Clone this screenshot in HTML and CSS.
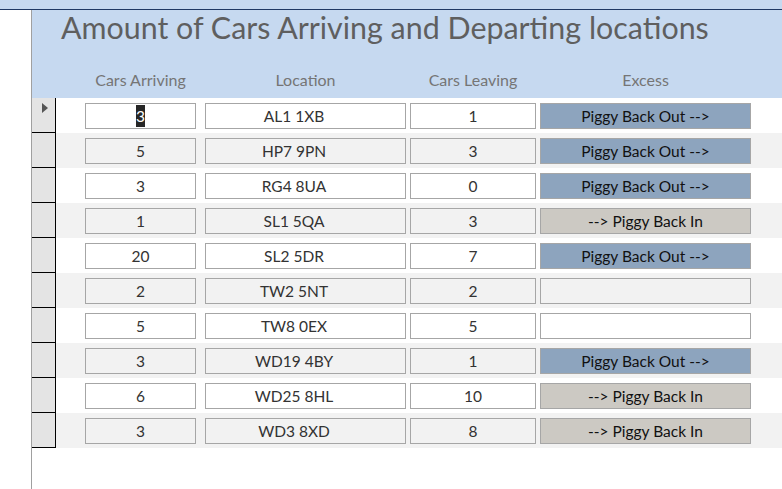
FILE: index.html
```
<!DOCTYPE html>
<html>
<head>
<meta charset="UTF-8">
<title>Amount of Cars Arriving and Departing locations</title>
<link rel="stylesheet" href="styles.css">
</head>
<body>
<div class="topbar"></div>
<div class="main">
	<div class="gutter"></div>
	<div class="form">
		<div class="formHead">
			<div class="title">Amount of Cars Arriving and Departing locations</div>
			<div class="labels">
				<div class="cArr">Cars Arriving</div>
				<div class="cLoc">Location</div>
				<div class="cLeave">Cars Leaving</div>
				<div class="cExc">Excess</div>
			</div>
		</div>
		<div class="rows">
			<div class="row">
				<div class="sel"><span class="arrow"></span></div>
				<div class="box cArr"><span class="hl">3</span></div>
				<div class="box cLoc">AL1 1XB</div>
				<div class="box cLeave">1</div>
				<div class="box cExc out">Piggy Back Out --&gt;</div>
			</div>
			<div class="row">
				<div class="sel"></div>
				<div class="box cArr">5</div>
				<div class="box cLoc">HP7 9PN</div>
				<div class="box cLeave">3</div>
				<div class="box cExc out">Piggy Back Out --&gt;</div>
			</div>
			<div class="row">
				<div class="sel"></div>
				<div class="box cArr">3</div>
				<div class="box cLoc">RG4 8UA</div>
				<div class="box cLeave">0</div>
				<div class="box cExc out">Piggy Back Out --&gt;</div>
			</div>
			<div class="row">
				<div class="sel"></div>
				<div class="box cArr">1</div>
				<div class="box cLoc">SL1 5QA</div>
				<div class="box cLeave">3</div>
				<div class="box cExc in">--&gt; Piggy Back In</div>
			</div>
			<div class="row">
				<div class="sel"></div>
				<div class="box cArr">20</div>
				<div class="box cLoc">SL2 5DR</div>
				<div class="box cLeave">7</div>
				<div class="box cExc out">Piggy Back Out --&gt;</div>
			</div>
			<div class="row">
				<div class="sel"></div>
				<div class="box cArr">2</div>
				<div class="box cLoc">TW2 5NT</div>
				<div class="box cLeave">2</div>
				<div class="box cExc"></div>
			</div>
			<div class="row">
				<div class="sel"></div>
				<div class="box cArr">5</div>
				<div class="box cLoc">TW8 0EX</div>
				<div class="box cLeave">5</div>
				<div class="box cExc"></div>
			</div>
			<div class="row">
				<div class="sel"></div>
				<div class="box cArr">3</div>
				<div class="box cLoc">WD19 4BY</div>
				<div class="box cLeave">1</div>
				<div class="box cExc out">Piggy Back Out --&gt;</div>
			</div>
			<div class="row">
				<div class="sel"></div>
				<div class="box cArr">6</div>
				<div class="box cLoc">WD25 8HL</div>
				<div class="box cLeave">10</div>
				<div class="box cExc in">--&gt; Piggy Back In</div>
			</div>
			<div class="row">
				<div class="sel"></div>
				<div class="box cArr">3</div>
				<div class="box cLoc">WD3 8XD</div>
				<div class="box cLeave">8</div>
				<div class="box cExc in">--&gt; Piggy Back In</div>
			</div>
		</div>
	</div>
</div>
</body>
</html>
```

FILE: styles.css
```
body {
	margin: 0;
	width: 782px;
	height: 489px;
	overflow: hidden;
	background: #fff;
	font-family: "Lato", "Open Sans", sans-serif;
}

.topbar {
	height: 9px;
	background: #c6d9f0;
	border-bottom: 1px solid #1f3864;
}

.main {
	display: flex;
	height: 479px;
}

.gutter {
	width: 31px;
}

.form {
	flex: 1;
	border-left: 1px solid #a0a0a0;
}

.formHead {
	height: 88px;
	background: #c6d9f0;
}

.title {
	padding-left: 29px;
	font-size: 30.4px;
	line-height: 34px;
	color: #5f5f5f;
}

.labels {
	display: flex;
	margin-top: 27px;
	padding-left: 53px;
	font-size: 16px;
	line-height: 18px;
	color: #757575;
}

.labels div {
	text-align: center;
}

.cArr {
	width: 111px;
	margin-right: 9px;
}

.cLoc {
	width: 201px;
	margin-right: 4px;
}

.cLeave {
	width: 126px;
	margin-right: 4px;
}

.cExc {
	width: 211px;
}

.row {
	display: flex;
	height: 35px;
}

.row:nth-child(even) {
	background: #f2f2f2;
}

.sel {
	width: 24px;
	height: 35px;
	box-sizing: border-box;
	background: #e4e4e4;
	border-right: 1px solid #000;
	border-bottom: 1px solid #000;
	margin-right: 29px;
	flex: none;
}

.arrow {
	display: block;
	width: 0;
	height: 0;
	margin: 5px 0 0 10px;
	border-top: 5.5px solid transparent;
	border-bottom: 5.5px solid transparent;
	border-left: 6px solid #555;
}

.box {
	box-sizing: border-box;
	height: 26px;
	margin-top: 5px;
	border: 1px solid #a6a6a6;
	text-align: center;
	font-size: 15.5px;
	line-height: 24px;
	color: #333;
}

.box.cLoc {
	padding-right: 23px;
}

.out {
	background: #8da4be;
	color: #111;
}

.in {
	background: #ccc9c3;
	color: #111;
}

.hl {
	background: #262626;
	color: #fff;
	padding: 2px 0;
}
```
